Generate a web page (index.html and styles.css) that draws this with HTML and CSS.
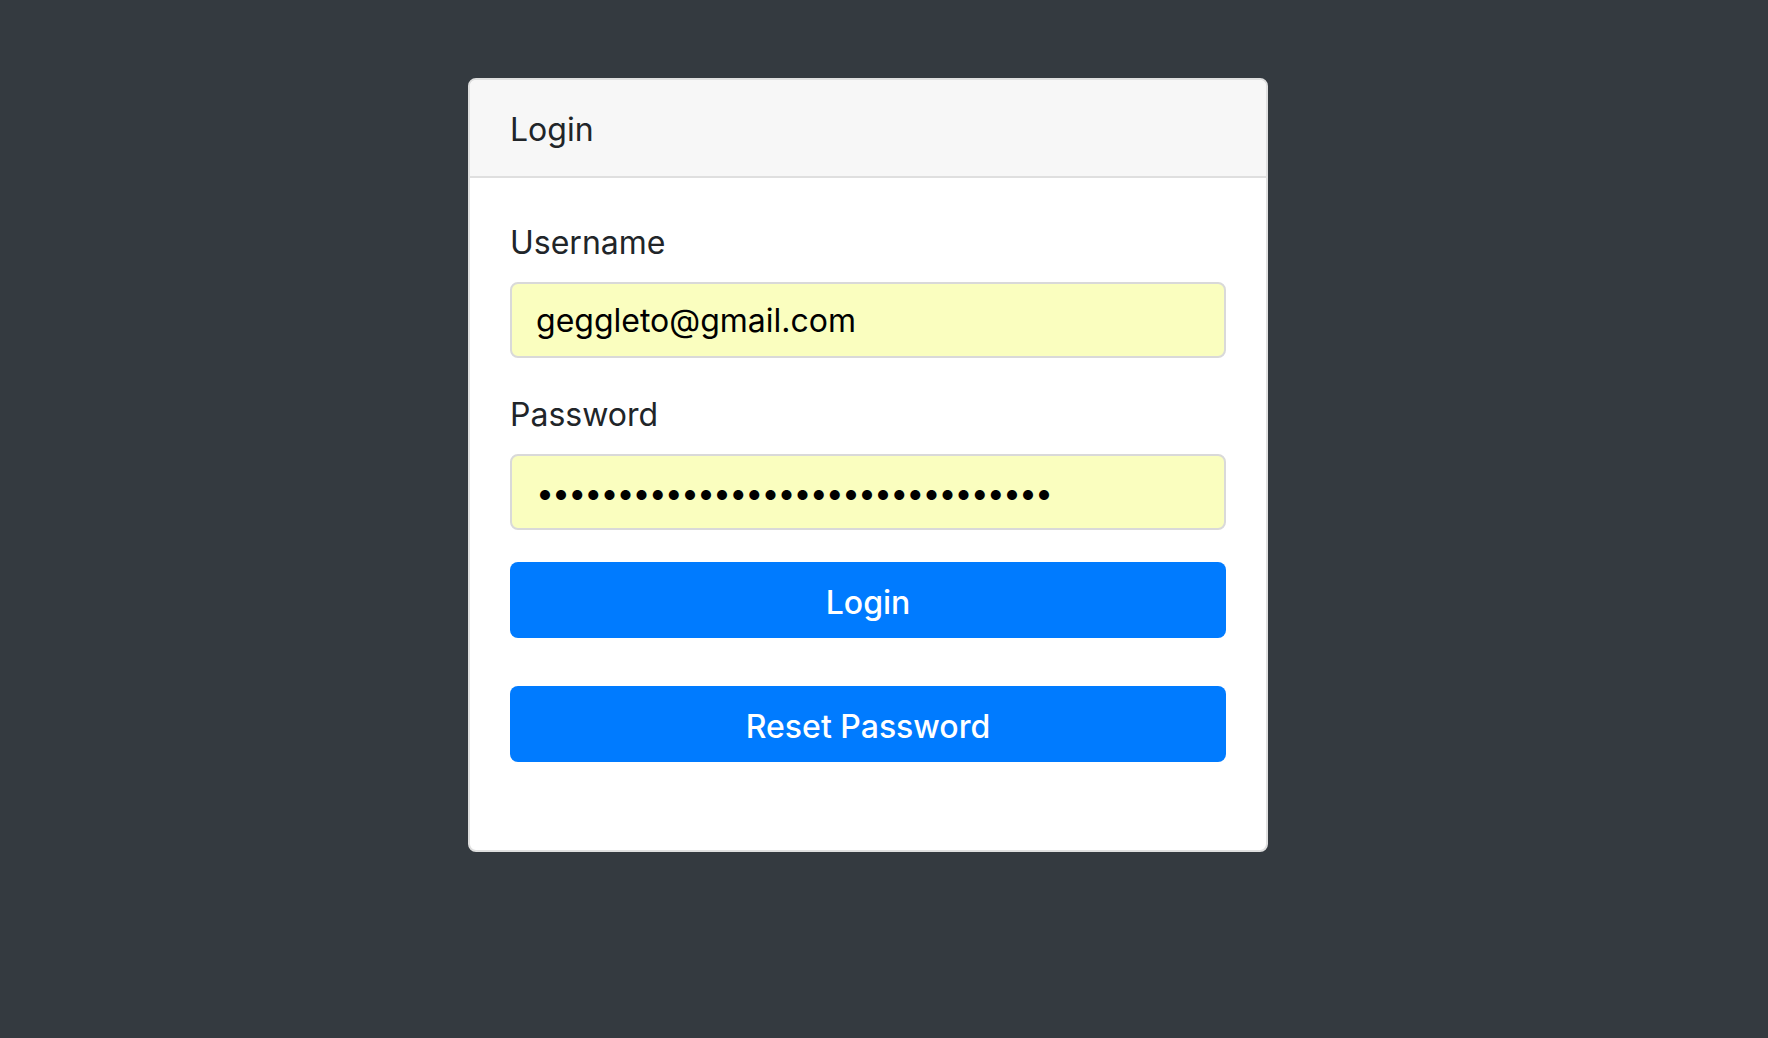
FILE: index.html
```html
<!DOCTYPE html>
<html lang="en">
<head>
<meta charset="utf-8">
<title>Login</title>
<link rel="stylesheet" href="styles.css">
</head>
<body>
<div class="page">
  <div class="card">
    <div class="card-header">Login</div>
    <form class="card-body">
      <div class="form-group">
        <label class="label" for="username">Username</label>
        <input class="field" id="username" type="text" value="geggleto@gmail.com">
      </div>
      <div class="form-group">
        <label class="label" for="password">Password</label>
        <input class="field field-pass" id="password" type="password" value="abcdefghijklmnopqrstuvwxyzabcdef">
      </div>
      <button class="btn btn-login" type="button">Login</button>
      <button class="btn btn-reset" type="button">Reset Password</button>
    </form>
  </div>
</div>
</body>
</html>
```

FILE: styles.css
```css
* {
  box-sizing: border-box;
}

html, body {
  margin: 0;
  padding: 0;
  height: 100%;
}

body {
  background: #343a40;
  font-family: Inter, "Noto Sans", "Liberation Sans", sans-serif;
  color: #212529;
}

.page {
  display: flex;
  justify-content: center;
  padding-top: 78px;
  padding-right: 32px;
}

.card {
  width: 800px;
  background: #ffffff;
  border: 2px solid #dfdfdf;
  border-radius: 8px;
  overflow: hidden;
}

.card-header {
  background: #f7f7f7;
  border-bottom: 2px solid #dfdfdf;
  padding: 26px 40px 22px;
  font-size: 32px;
  line-height: 48px;
}

.card-body {
  display: flex;
  flex-direction: column;
  padding: 40px 40px 88px;
  margin: 0;
}

.form-group {
  display: flex;
  flex-direction: column;
  margin-bottom: 32px;
}

.label {
  font-size: 32px;
  line-height: 46px;
  padding-top: 2px;
  margin-bottom: 16px;
}

.field {
  height: 76px;
  width: 100%;
  border: 2px solid #d9d9d9;
  border-radius: 8px;
  background: #fafebf;
  padding: 12px 24px;
  font-family: inherit;
  font-size: 32px;
  line-height: 48px;
  color: #000000;
  outline: none;
}

.field-pass {
  letter-spacing: -1.9px;
}

.btn {
  height: 76px;
  width: 100%;
  border: 0;
  border-radius: 8px;
  background: #007bff;
  color: #ffffff;
  font-family: inherit;
  font-size: 32px;
  font-weight: 500;
  line-height: 48px;
  padding: 15px 24px 9px;
  cursor: pointer;
}

.btn-login {
  margin-bottom: 48px;
}
```
